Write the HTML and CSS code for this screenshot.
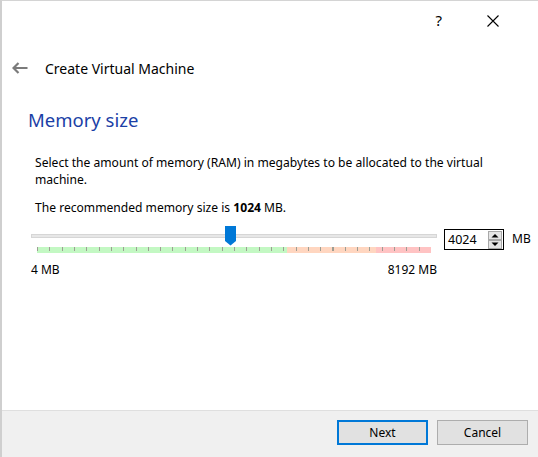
FILE: index.html
```html
<!DOCTYPE html>
<html>
<head>
<meta charset="utf-8">
<link rel="stylesheet" href="styles.css">
</head>
<body>
<div class="window">
  <div class="titlebar">
    <span class="help">?</span>
    <svg class="close" width="12" height="12" viewBox="0 0 12 12"><path d="M0.5 0.5 L11.5 11.5 M11.5 0.5 L0.5 11.5" stroke="#000" stroke-width="1.1" fill="none"/></svg>
  </div>
  <div class="header">
    <svg class="back" width="16" height="12" viewBox="0 0 16 12"><path d="M1.5 6 H15.5 M6.5 1 L1.5 6 L6.5 11" stroke="#7b7b7b" stroke-width="2.2" fill="none"/></svg>
    <span class="title">Create Virtual Machine</span>
  </div>
  <div class="content">
    <h1 class="heading">Memory size</h1>
    <div class="body">
      <p class="desc">Select the amount of memory (RAM) in megabytes to be allocated to the virtual machine.</p>
      <p class="desc">The recommended memory size is <b>1024</b> MB.</p>
      <div class="slider-row">
        <div class="slider">
          <div class="groove"></div>
          <svg class="thumb" width="11" height="20" viewBox="0 0 11 20"><path d="M0 0 H11 V15 L5.5 19.5 L0 15 Z" fill="#0078d7"/></svg>
          <div class="ticks"></div>
          <div class="limits"><span>4 MB</span><span>8192 MB</span></div>
        </div>
        <div class="spinbox">
          <span class="value">4024</span>
          <svg class="spin" width="14" height="18" viewBox="0 0 14 18"><rect x="0.5" y="0.5" width="13" height="8" fill="#e5e5e5" stroke="#a8a8a8"/><rect x="0.5" y="9.5" width="13" height="8" fill="#e5e5e5" stroke="#a8a8a8"/><path d="M3.5 6.5 L7 3 L10.5 6.5 Z" fill="#000"/><path d="M3.5 11.5 L7 15 L10.5 11.5 Z" fill="#000"/></svg>
        </div>
        <span class="unit">MB</span>
      </div>
    </div>
  </div>
  <div class="footer">
    <button class="btn primary">Next</button>
    <button class="btn">Cancel</button>
  </div>
</div>
</body>
</html>
```
FILE: styles.css
```css
html, body {
  margin: 0;
  padding: 0;
  background: #ffffff;
}
body {
  font-family: "Noto Sans", "Liberation Sans", sans-serif;
  font-size: 12px;
  color: #000;
}
.window {
  width: 536px;
  height: 456px;
  border-left: 2px solid #cfcfcf;
  border-top: 1px solid #d4d4d4;
  display: flex;
  flex-direction: column;
  background: #fff;
}
.titlebar {
  height: 39px;
  display: flex;
  align-items: center;
  justify-content: flex-end;
  padding-right: 39px;
  gap: 45px;
}
.help {
  font-size: 15px;
  line-height: 15px;
  margin-top: -1px;
}
.close {
  display: block;
}
.header {
  height: 56px;
  display: flex;
  align-items: center;
  padding-left: 10px;
}
.back {
  display: block;
  margin-right: 17px;
}
.title {
  font-size: 14px;
  color: #000;
}
.content {
  padding-left: 26px;
}
.heading {
  margin: 11px 0 0 0;
  font-size: 18.5px;
  line-height: 26px;
  font-weight: normal;
  color: #1b3fa6;
}
.body {
  padding-left: 7px;
  padding-right: 28px;
  margin-top: 21px;
}
.desc {
  margin: 0 0 9px 0;
  line-height: 17px;
  font-size: 12.1px;
}
.desc + .desc {
  margin-top: 11px;
}
.slider-row {
  display: flex;
  align-items: flex-start;
  margin-top: 8px;
  margin-left: -4px;
}
.slider {
  position: relative;
  width: 406px;
  flex-shrink: 0;
  padding-top: 9px;
}
.groove {
  height: 2px;
  border: 1px solid #d6d6d6;
  background: #e7e7e7;
}
.thumb {
  position: absolute;
  left: 194px;
  top: 1px;
}
.ticks {
  margin: 9px 6px 0 6px;
  height: 6px;
  background:
    repeating-linear-gradient(90deg, #9d9d93 0 1px, transparent 1px 12.3125px) top left / 100% 4px no-repeat,
    linear-gradient(90deg, #c3f8c3 0 250px, #ffd6c0 250px 339px, #ffc3c3 339px);
}
.limits {
  display: flex;
  justify-content: space-between;
  margin-top: 9px;
  line-height: 16px;
}
.spinbox {
  flex-shrink: 0;
  margin-left: 7px;
  margin-top: 4px;
  width: 54px;
  height: 19px;
  border: 1px solid #000;
  display: flex;
  align-items: center;
  justify-content: space-between;
  padding: 0 1px 0 3px;
  box-sizing: content-box;
}
.value {
  line-height: 19px;
  font-size: 12.5px;
}
.spin {
  display: block;
}
.unit {
  flex-shrink: 0;
  margin-left: 8px;
  margin-top: 6px;
  line-height: 16px;
}
.footer {
  margin-top: auto;
  height: 46px;
  border-top: 1px solid #dfdfdf;
  background: #f0f0f0;
  display: flex;
  justify-content: flex-end;
  align-items: flex-start;
  gap: 9px;
  padding-right: 10px;
}
.btn {
  margin-top: 9px;
  width: 91px;
  height: 25px;
  font-family: "Noto Sans", "Liberation Sans", sans-serif;
  font-size: 12px;
  color: #000;
  background: #e1e1e1;
  border: 1px solid #adadad;
  padding: 0;
}
.btn.primary {
  border: 2px solid #0078d7;
}
```
